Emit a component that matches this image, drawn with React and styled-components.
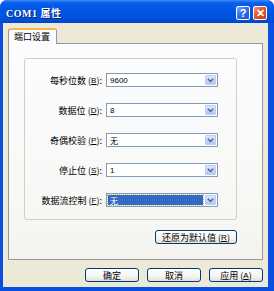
import React from "react";
import styled, { createGlobalStyle } from "styled-components";

const GlobalStyle = createGlobalStyle`
  html, body {
    margin: 0;
    padding: 0;
    background: #ffffff;
  }
  body {
    font-family: "Noto Sans CJK SC", "DejaVu Sans", sans-serif;
    font-size: 9px;
  }
`;

const StyledWindow = styled.div`
  width: 274px;
  height: 291px;
  display: flex;
  flex-direction: column;
  background: #0a4fe0;
  border-radius: 7px 7px 0 0;
  overflow: hidden;
  box-sizing: border-box;
`;

const TitleBar = styled.div`
  height: 23px;
  flex-shrink: 0;
  display: flex;
  align-items: center;
  justify-content: space-between;
  padding: 0 7px 0 6px;
  background: linear-gradient(
    to bottom,
    #3d8cf7 0%,
    #0a5fec 12%,
    #0055e5 45%,
    #0052de 75%,
    #0047c9 100%
  );
`;

const Title = styled.span`
  color: #ffffff;
  font-family: "Liberation Serif", "Noto Sans CJK SC", serif;
  font-weight: bold;
  font-size: 10px;
  letter-spacing: 0.5px;
  text-shadow: 1px 1px 0 #0a1e6e;
  margin-top: 2px;
`;

const TitleButtons = styled.div`
  display: flex;
  gap: 3px;
  margin-top: 3px;
`;

const CaptionButton = styled.div`
  width: 14px;
  height: 14px;
  box-sizing: border-box;
  border: 1px solid #ffffff;
  border-radius: 2px;
  display: flex;
  align-items: center;
  justify-content: center;
  color: #ffffff;
  font-family: "Liberation Sans", sans-serif;
  font-weight: bold;
  font-size: 11px;
  background: ${(p) =>
    p.$close
      ? "linear-gradient(135deg, #f09a7e 0%, #e0532d 45%, #c73a14 100%)"
      : "linear-gradient(135deg, #7ab0ff 0%, #2d6ff0 45%, #1a55d6 100%)"};
`;

const Body = styled.div`
  flex: 1;
  display: flex;
  flex-direction: column;
  margin: 0 6px 4px 3px;
  padding: 5px 5px 5px 5px;
  background: #ece9d8;
`;

const TabStrip = styled.div`
  display: flex;
  height: 15px;
  position: relative;
  z-index: 1;
`;

const Tab = styled.div`
  width: 49px;
  box-sizing: border-box;
  padding: 1px 0 0 5px;
  background: #fcfcfe;
  border: 1px solid #919b9c;
  border-bottom: none;
  border-top: 2px solid #f6b74a;
  border-radius: 3px 3px 0 0;
  color: #000000;
  font-size: 9px;
  line-height: 12px;
  height: 16px;
`;

const Panel = styled.div`
  height: 217px;
  box-sizing: border-box;
  border: 1px solid #919b9c;
  background: linear-gradient(to bottom, #fcfcfe 0%, #f8f8f6 70%, #f4f3ee 100%);
  padding: 14px 25px 0 15px;
  display: flex;
  flex-direction: column;
  align-items: flex-end;
`;

const GroupBox = styled.div`
  width: 213px;
  height: 162px;
  box-sizing: border-box;
  border: 1px solid #d0d0bf;
  border-radius: 3px;
  padding: 14px 0 0 0;
  display: grid;
  grid-template-columns: 77px 112px;
  grid-auto-rows: 15px;
  column-gap: 4px;
  row-gap: 15px;
`;

const Label = styled.label`
  display: flex;
  align-items: center;
  justify-content: flex-end;
  color: #000000;
  font-size: 9px;
  white-space: nowrap;
`;

const Key = styled.span`
  text-decoration: underline;
  font-family: "Liberation Sans", sans-serif;
  font-size: 8px;
`;

const Combo = styled.div`
  display: flex;
  align-items: center;
  box-sizing: border-box;
  height: 14px;
  border: 1px solid #7f9db9;
  background: #ffffff;
  padding: 1px;
`;

const ComboValue = styled.div`
  flex: 1;
  height: 10px;
  margin-right: 2px;
  display: flex;
  align-items: center;
  padding-left: 2px;
  color: ${(p) => (p.$selected ? "#ffffff" : "#000000")};
  background: ${(p) => (p.$selected ? "#316ac5" : "transparent")};
  outline: ${(p) => (p.$selected ? "1px dotted #d8c060" : "none")};
  font-family: "Liberation Sans", "Noto Sans CJK SC", sans-serif;
  font-size: 8px;
`;

const ComboButton = styled.div`
  width: 11px;
  height: 10px;
  box-sizing: border-box;
  border: 1px solid #b9ccf4;
  border-radius: 1px;
  background: linear-gradient(to bottom, #dbe6fe 0%, #c4d5fb 60%, #b4c8f6 100%);
  display: flex;
  align-items: center;
  justify-content: center;
`;

const ButtonRow = styled.div`
  display: flex;
  justify-content: flex-end;
  gap: 8px;
  margin-top: 8px;
`;

const Button = styled.div`
  width: ${(p) => p.$width || 54}px;
  height: 14px;
  box-sizing: border-box;
  border: 1px solid #003c74;
  border-radius: 3px;
  background: linear-gradient(to bottom, #ffffff 0%, #f5f4ef 60%, #e3e1d6 100%);
  display: flex;
  align-items: center;
  justify-content: center;
  color: #000000;
  font-size: 9px;
  white-space: pre;
  margin-top: ${(p) => p.$top || 0}px;
`;

const Arrow = () => (
  <svg width="7" height="5" viewBox="0 0 7 5">
    <path d="M0.8 0.8 L3.5 3.5 L6.2 0.8" fill="none" stroke="#4d6185" strokeWidth="1.4" />
  </svg>
);

const rows = [
  { label: "每秒位数", key: "B", value: "9600" },
  { label: "数据位", key: "D", value: "8" },
  { label: "奇偶校验", key: "P", value: "无" },
  { label: "停止位", key: "S", value: "1" },
  { label: "数据流控制", key: "F", value: "无", selected: true },
];

const App = () => {
  return (
    <>
      <GlobalStyle />
      <StyledWindow>
        <TitleBar>
          <Title>COM1 属性</Title>
          <TitleButtons>
            <CaptionButton>?</CaptionButton>
            <CaptionButton $close>✕</CaptionButton>
          </TitleButtons>
        </TitleBar>
        <Body>
          <TabStrip>
            <Tab>端口设置</Tab>
          </TabStrip>
          <Panel>
            <GroupBox>
              {rows.map((row) => (
                <React.Fragment key={row.key}>
                  <Label>
                    {row.label}&nbsp;(<Key>{row.key}</Key>):
                  </Label>
                  <Combo>
                    <ComboValue $selected={row.selected}>{row.value}</ComboValue>
                    <ComboButton>
                      <Arrow />
                    </ComboButton>
                  </Combo>
                </React.Fragment>
              ))}
            </GroupBox>
            <Button $width={82} $top={10}>
              还原为默认值 (<Key>R</Key>)
            </Button>
          </Panel>
          <ButtonRow>
            <Button>确定</Button>
            <Button>取消</Button>
            <Button>
              应用 (<Key>A</Key>)
            </Button>
          </ButtonRow>
        </Body>
      </StyledWindow>
    </>
  );
};

export default App;
